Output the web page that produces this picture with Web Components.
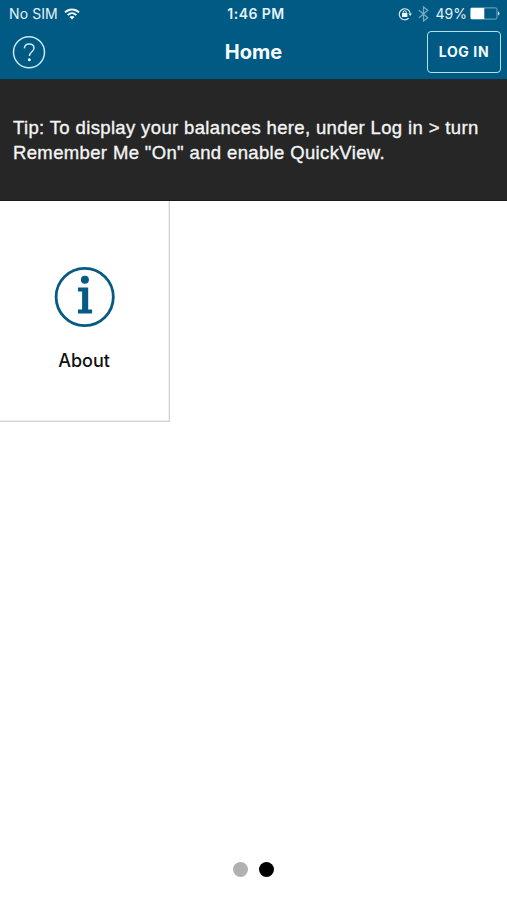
<!DOCTYPE html>
<html lang="en"><head><meta charset="utf-8"><title>Home</title>
<style>html,body{margin:0;height:100%;background:#fff}body{font-family:Inter,"Liberation Sans",sans-serif}</style></head>
<body><home-screen></home-screen>
<script>
const define=(name,html)=>customElements.define(name,class extends HTMLElement{
 constructor(){super();this.attachShadow({mode:'open'}).innerHTML=html;}
});
define('status-bar',`<style>
:host{display:grid;grid-template-columns:1fr auto 1fr;height:27px;align-items:center;color:#e4f1f8;font-size:13.5px;line-height:28px;box-sizing:border-box;padding:0 7px 0 9px}
div{display:flex;align-items:center;height:27px}svg{display:block;flex:none}
.carrier{font-size:14px;letter-spacing:.1px}.time{font-weight:600;font-size:14px;letter-spacing:.45px;padding-left:3px}.right{justify-content:flex-end}
.pct{margin-left:7px;margin-right:3px;font-size:14px}
</style>
<div><span class="carrier">No SIM</span><svg style="margin-left:6px" width="16" height="12" viewBox="0 0 16 12" fill="none" stroke="#eef8fc" stroke-width="2"><path d="M1 4.4C5 .5 11 .5 15 4.4M3.7 7.1c2.5-2.4 6.1-2.4 8.6 0"/><path d="M8 11.5 5.5 9c1.4-1.2 3.6-1.2 5 0z" fill="#eef8fc" stroke="none"/></svg></div>
<div class="time">1:46 PM</div>
<div class="right"><svg width="14" height="14" viewBox="0 0 14 14"><path d="M10.6 11.2A5.5 5.5 0 1 1 12.2 6.5" fill="none" stroke="#d6e9f3" stroke-width="1.2"/><path d="m10.4 6.4 3.6 0-1.8 2.6z" fill="#d6e9f3"/><rect x="4" y="6" width="5.4" height="4" rx=".5" fill="#eef8fc"/><path d="M5.2 6.5V5.2a1.5 1.5 0 0 1 3 0v1.3" fill="none" stroke="#eef8fc"/></svg>
<svg style="margin-left:6px" width="11" height="16" viewBox="0 0 11 16" fill="none" stroke="#75a8c5" stroke-width="1.3"><path d="m1 4.2 8.8 7.5L5.5 15V1l4.3 3.3L1 11.8"/></svg>
<span class="pct">49%</span><svg width="30" height="13" viewBox="0 0 30 13"><rect x=".5" y=".9" width="26.5" height="11.2" rx="1.5" fill="none" stroke="#78abc5"/><path d="M.8 1h13.5v11H.8z" fill="#fff"/><path d="M28 4.5c2 .8 2 3.2 0 4z" fill="#c5deea"/></svg></div>`);
define('help-button',`<style>:host{display:block;width:34px;height:34px}svg{display:block}</style>
<svg width="34" height="34" viewBox="0 0 34 34" fill="none" stroke="#c9eaf8" stroke-width="1.5"><circle cx="17" cy="17.2" r="15.5"/><path d="M12.4 13.4c.1-2.9 1.9-4.5 4.8-4.5 2.8 0 4.8 1.6 4.8 4.1 0 4-4.6 3.9-4.6 7.9"/><circle cx="17.3" cy="24.7" r="1.5" fill="#e8f8ff" stroke="none"/></svg>`);
define('login-button',`<style>:host{display:flex;align-items:center;justify-content:center;width:74px;height:42px;box-sizing:border-box;border:1.5px solid #b6e0f2;border-radius:4px;color:#f3faff;font-size:14px;font-weight:700;letter-spacing:.6px;padding-bottom:1px}</style><slot></slot>`);
define('nav-bar',`<style>:host{display:grid;grid-template-columns:74px 1fr 74px;align-items:center;height:50px;padding:0 6px 0 12px;box-sizing:border-box;color:#f7fcff}
.title{font-size:20px;font-weight:700;line-height:24px;text-align:center;padding-right:6px}login-button{justify-self:end}</style>
<help-button></help-button><div class="title"><slot></slot></div><login-button>LOG IN</login-button>`);
define('tip-banner',`<style>:host{display:block;height:122px;box-sizing:border-box;background:#262626;border-top:1px solid #1d2b34;border-bottom:1px solid #191919;padding:36px 13px 0;color:#f4f4f4;font:18.5px/24.5px "Liberation Sans",Arial,sans-serif;letter-spacing:.36px;-webkit-text-stroke:.35px #f4f4f4}
::slotted(div){white-space:nowrap}</style><slot></slot>`);
define('menu-tile',`<style>:host{display:flex;flex-direction:column;align-items:center;width:170px;height:221px;box-sizing:border-box;border-right:1px solid #d2d2d2;border-bottom:1px solid #d2d2d2;padding-top:65px;color:#111;font-size:18px;font-weight:500;line-height:24px;box-shadow:inset -1px -1px #f1f1f1}
svg{display:block;margin-bottom:21px}slot{display:block;padding-right:1px}</style>
<svg width="62" height="62" viewBox="0 0 62 62"><circle cx="30.7" cy="31" r="28.6" fill="none" stroke="#075a84" stroke-width="2.8"/><g fill="#075a84"><circle cx="30.9" cy="13.8" r="4"/><path d="M24 21.6h10.2v22h3.9v4H24v-4h4.1V25.6H24z"/></g></svg><slot></slot>`);
define('page-dots',`<style>:host{display:flex;justify-content:center;gap:11px;padding-bottom:23px}i{width:15px;height:15px;border-radius:50%;background:#b1b1b1}.on{background:#000}</style><i></i><i class="on"></i>`);
define('home-screen',`<style>:host{display:flex;flex-direction:column;height:900px}header{background:#005a83;height:79px}main{flex:1}</style>
<header><status-bar></status-bar><nav-bar>Home</nav-bar></header>
<tip-banner><div>Tip: To display your balances here, under Log in &gt; turn</div><div>Remember Me "On" and enable QuickView.</div></tip-banner>
<main><menu-tile>About</menu-tile></main><page-dots></page-dots>`);
</script></body></html>
